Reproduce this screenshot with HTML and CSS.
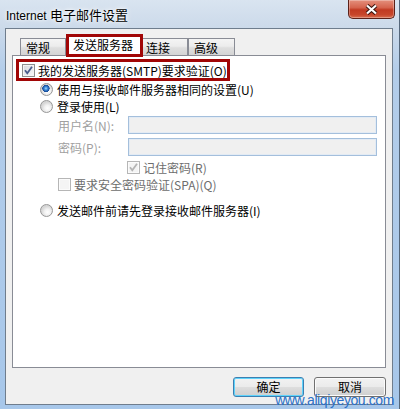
FILE: index.html
```html
<!DOCTYPE html>
<html lang="zh">
<head>
  <meta charset="UTF-8">
  <title>Internet 电子邮件设置</title>
  <link rel="stylesheet" href="styles.css">
</head>
<body>

  <div class="window">
    <div class="titlebar">
      <div class="title">Internet <span class="title-cjk">电子邮件设置</span></div>
      <div class="close">
        <svg width="13" height="11" viewBox="0 0 13 11">
          <path d="M2 1.5 L11 9.5 M11 1.5 L2 9.5" stroke="#3a1510" stroke-width="4.2" fill="none"/>
          <path d="M2 1.5 L11 9.5 M11 1.5 L2 9.5" stroke="#ffffff" stroke-width="2.2" fill="none"/>
        </svg>
      </div>
    </div>

    <div class="client">
      <div class="tabs">
        <div class="tab tab-general">常规</div>
        <div class="tab tab-active">发送服务器</div>
        <div class="tab tab-conn">连接</div>
        <div class="tab tab-adv">高级</div>
      </div>

      <div class="panel">
        <div class="row auth">
          <span class="cb">
            <svg width="11" height="11" viewBox="0 0 11 11"><path d="M2 5.2 L4.3 8.2 L9 1.8" stroke="#4a5c8c" stroke-width="1.8" fill="none"/></svg>
          </span>
          <span class="txt">我的发送服务器(SMTP)要求验证(O)</span>
        </div>

        <div class="row opt opt-same">
          <span class="rb rb-on"></span>
          <span class="txt">使用与接收邮件服务器相同的设置(U)</span>
        </div>

        <div class="row opt opt-login">
          <span class="rb"></span>
          <span class="txt">登录使用(L)</span>
        </div>

        <div class="row field field-user">
          <span class="lbl">用户名(N):</span>
          <span class="input"></span>
        </div>

        <div class="row field field-pass">
          <span class="lbl">密码(P):</span>
          <span class="input"></span>
        </div>

        <div class="row remember">
          <span class="cb cb-off">
            <svg width="11" height="11" viewBox="0 0 11 11"><path d="M2 5.2 L4.3 8.2 L9 1.8" stroke="#b4b4b4" stroke-width="1.8" fill="none"/></svg>
          </span>
          <span class="txt dim">记住密码(R)</span>
        </div>

        <div class="row spa">
          <span class="cb cb-off"></span>
          <span class="txt dim">要求安全密码验证(SPA)(Q)</span>
        </div>

        <div class="row opt opt-pop">
          <span class="rb"></span>
          <span class="txt">发送邮件前请先登录接收邮件服务器(I)</span>
        </div>
      </div>

      <div class="buttons">
        <div class="btn btn-default">确定</div>
        <div class="btn">取消</div>
      </div>
    </div>

    <div class="watermark">www.aliqiyeyou.com</div>
  </div>

</body>
</html>
```

FILE: styles.css
```css
body {
  margin: 0;
  padding: 0;
  font-family: "Noto Sans CJK SC", sans-serif;
  font-size: 12px;
  color: #000;
}

.window {
  position: relative;
  width: 400px;
  height: 409px;
  box-sizing: border-box;
  padding: 0 6px 4px 5px;
  border-right: 1px solid #55677b;
  background: linear-gradient(to bottom, #d9e4f0 0, #ccdaea 27px, #b3cdea 70px, #a7c7ea 100%);
  display: flex;
  flex-direction: column;
  overflow: hidden;
}

/* title bar */
.titlebar {
  height: 28px;
  display: flex;
  align-items: flex-start;
}

.title {
  padding: 7px 0 0 1px;
  font-family: "Liberation Sans", "Noto Sans CJK SC", sans-serif;
  font-size: 12px;
  line-height: 15px;
  text-shadow: 0 0 6px #fff, 0 0 3px #fff;
}

.title-cjk {
  font-family: "Noto Sans CJK SC", sans-serif;
  font-size: 13px;
}

.close {
  margin-left: auto;
  margin-right: -2px;
  width: 47px;
  height: 19px;
  box-sizing: border-box;
  border: 1px solid #5b2119;
  border-top: none;
  border-radius: 0 0 5px 5px;
  background: linear-gradient(to bottom, #e4907d 0, #d5644e 42%, #c13a22 55%, #c7462b 82%, #d86e50 100%);
  box-shadow: inset 0 0 0 1px rgba(255, 255, 255, 0.3);
  display: flex;
  justify-content: center;
  align-items: center;
}

/* client area */
.client {
  flex: 1;
  background: #f0f0f0;
  border: 1px solid #6f7d8d;
  padding: 5px 6px 7px 6px;
  display: flex;
  flex-direction: column;
}

.tabs {
  height: 21px;
  display: flex;
  align-items: flex-end;
  padding-left: 8px;
}

.tab {
  height: 17px;
  box-sizing: border-box;
  border: 1px solid #898c95;
  border-bottom: none;
  background: linear-gradient(to bottom, #f4f4f4 0, #ececec 45%, #dedede 55%, #d4d4d4 100%);
  line-height: 15px;
  padding-top: 1px;
}

.tab-general { width: 46px; padding-left: 5px; }
.tab-conn { width: 45px; padding-left: 3px; border-left: none; }
.tab-adv { width: 47px; padding-left: 5px; }

.tab-active {
  position: relative;
  z-index: 1;
  width: 77px;
  height: 23px;
  margin-bottom: -2px;
  border: 3px solid #a10606;
  background: #fff;
  padding-left: 4px;
  line-height: 15px;
  padding-top: 0;
}

.panel {
  flex: 1;
  background: #fff;
  border: 1px solid #898c95;
  padding-top: 3px;
  display: flex;
  flex-direction: column;
}

.row {
  display: flex;
  align-items: center;
  line-height: 15px;
  white-space: nowrap;
}

.auth {
  margin-left: 3px;
  width: 214px;
  height: 22px;
  box-sizing: border-box;
  border: 3px solid #a10606;
  padding-left: 3px;
}

.opt {
  padding-left: 27px;
}

.opt-same { height: 16px; }
.opt-login { height: 19px; }
.opt-pop { height: 13px; margin-top: 13px; }

.txt {
  margin-left: 3px;
}

.opt .txt {
  margin-left: 4px;
}

.dim {
  color: #6d6d6d;
}

.field {
  height: 18px;
  padding-left: 45px;
}

.field-pass { margin-top: 4px; }

.lbl {
  width: 70px;
  color: #a0a0a0;
}

.input {
  width: 249px;
  height: 18px;
  box-sizing: border-box;
  border: 1px solid #a4bfdc;
  background: #f0f0f0;
  box-shadow: inset 0 0 0 1px #e3ebf4;
}

.remember {
  height: 13px;
  margin-top: 5px;
  padding-left: 114px;
}

.spa {
  height: 13px;
  margin-top: 4px;
  padding-left: 45px;
}

/* checkbox */
.cb {
  width: 13px;
  height: 13px;
  box-sizing: border-box;
  border: 1px solid #8e8f8f;
  background: linear-gradient(135deg, #d4d8dd 0, #f9f9f9 100%);
  box-shadow: inset 0 0 0 1px #f4f4f4;
  flex-shrink: 0;
}

.cb svg {
  display: block;
}

.cb-off {
  border-color: #b6b6b6;
  background: #f4f4f4;
  box-shadow: inset 0 0 0 1px #fbfbfb;
}

/* radio */
.rb {
  width: 13px;
  height: 13px;
  box-sizing: border-box;
  border-radius: 50%;
  border: 1px solid #979797;
  background: radial-gradient(circle at 60% 65%, #ffffff 0, #f2f2f2 3px, #d6d6d6 6px);
  flex-shrink: 0;
}

.rb-on {
  background:
    radial-gradient(circle at 45% 40%, #a8dcff 0, #3d8ddd 1.6px, #1a4f9c 3.2px, #1a4f9c 3.5px, transparent 3.8px),
    radial-gradient(circle at 60% 65%, #ffffff 0, #f2f2f2 3px, #d6d6d6 6px);
}

/* buttons */
.buttons {
  height: 20px;
  margin-top: 9px;
  display: flex;
  justify-content: flex-end;
  gap: 10px;
}

.btn {
  width: 72px;
  height: 20px;
  box-sizing: border-box;
  border: 1px solid #707070;
  border-radius: 3px;
  background: linear-gradient(to bottom, #f2f2f2 0, #ebebeb 48%, #dddddd 52%, #cfcfcf 100%);
  box-shadow: inset 0 0 0 1px #fbfbfb;
  text-align: center;
  padding-top: 2px;
  line-height: 14px;
}

.btn-default {
  width: 71px;
  border-color: #3c7fb1;
  box-shadow: inset 0 0 0 1px #5fd3fb;
}

/* overlay watermark */
.watermark {
  position: absolute;
  right: 5px;
  bottom: 2px;
  font-family: "Liberation Sans", sans-serif;
  font-size: 14px;
  line-height: 13px;
  letter-spacing: -0.4px;
  color: #2b70c8;
}
```
